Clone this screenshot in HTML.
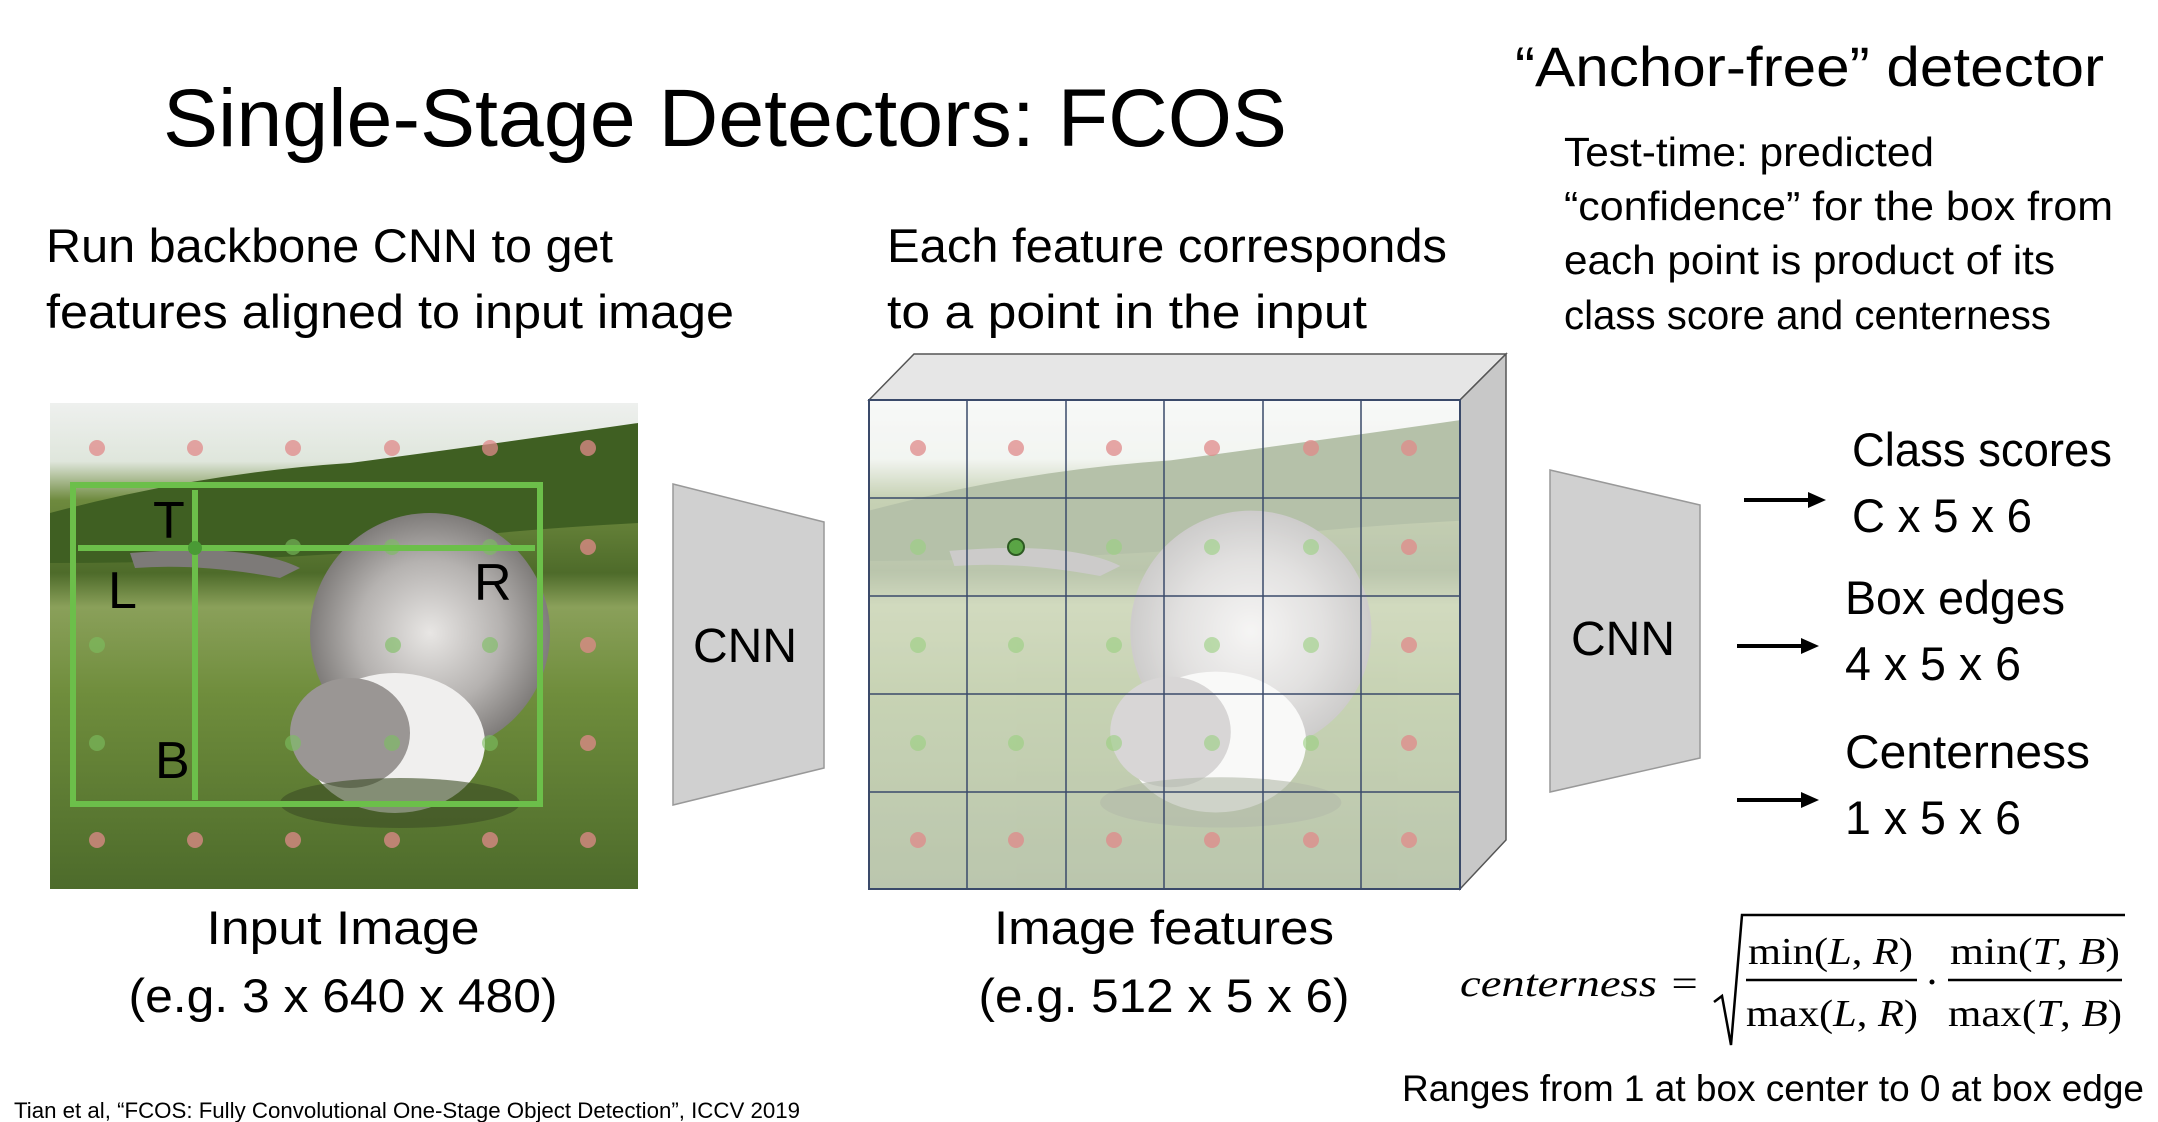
<!DOCTYPE html>
<html><head><meta charset="utf-8"><style>
html,body{margin:0;padding:0;background:#fff;}
svg{display:block;}
text{font-family:"Liberation Sans",sans-serif;fill:#000;}
.s{font-family:"Liberation Serif",serif;}
</style></head><body>
<svg width="2158" height="1122" viewBox="0 0 2158 1122" xmlns="http://www.w3.org/2000/svg">
<defs>
<linearGradient id="sky" x1="0" y1="0" x2="0" y2="1">
<stop offset="0" stop-color="#eef0ee"/><stop offset="0.12" stop-color="#dfe6dc"/>
<stop offset="0.2" stop-color="#6e8a3e"/><stop offset="0.35" stop-color="#4e6b2a"/>
<stop offset="0.42" stop-color="#8aa05a"/><stop offset="0.6" stop-color="#6f8d3c"/>
<stop offset="1" stop-color="#4d6b2b"/></linearGradient>
<radialGradient id="cat" cx="0.5" cy="0.5" r="0.5">
<stop offset="0" stop-color="#e8e6e4"/><stop offset="0.6" stop-color="#b5b2b0"/><stop offset="1" stop-color="#7f7c7a"/></radialGradient>
<g id="photo">
<rect x="0" y="0" width="588" height="486" fill="url(#sky)"/>
<path d="M0 110 Q150 70 300 60 Q450 40 588 20 L588 120 Q400 130 300 150 Q150 160 0 160Z" fill="#3f5f22"/>
<path d="M80 150 Q200 140 250 165 L230 175 Q150 160 85 165Z" fill="#7d7a78"/>
<ellipse cx="380" cy="230" rx="120" ry="120" fill="url(#cat)"/>
<ellipse cx="345" cy="340" rx="90" ry="70" fill="#f0efee"/>
<ellipse cx="300" cy="330" rx="60" ry="55" fill="#9a9694"/>
<ellipse cx="350" cy="400" rx="120" ry="25" fill="#3c4d25" opacity="0.6"/>
</g>
</defs>

<text x="163" y="146" font-size="82" textLength="1124" lengthAdjust="spacingAndGlyphs">Single-Stage Detectors: FCOS</text>
<text x="1515" y="86" font-size="56" textLength="589" lengthAdjust="spacingAndGlyphs">“Anchor-free” detector</text>
<g font-size="41">
<text x="1564" y="166" textLength="370" lengthAdjust="spacingAndGlyphs">Test-time: predicted</text>
<text x="1564" y="220" textLength="549" lengthAdjust="spacingAndGlyphs">“confidence” for the box from</text>
<text x="1564" y="274" textLength="491" lengthAdjust="spacingAndGlyphs">each point is product of its</text>
<text x="1564" y="329" textLength="487" lengthAdjust="spacingAndGlyphs">class score and centerness</text>
</g>
<g font-size="47">
<text x="46" y="262" textLength="567" lengthAdjust="spacingAndGlyphs">Run backbone CNN to get</text>
<text x="46" y="328" textLength="688" lengthAdjust="spacingAndGlyphs">features aligned to input image</text>
<text x="887" y="262" textLength="560" lengthAdjust="spacingAndGlyphs">Each feature corresponds</text>
<text x="887" y="328" textLength="480" lengthAdjust="spacingAndGlyphs">to a point in the input</text>
</g>

<g transform="translate(50,403)"><use href="#photo"/></g>
<g fill="#e08a8a" opacity="0.75">
<circle cx="97" cy="448" r="8"/><circle cx="195" cy="448" r="8"/><circle cx="293" cy="448" r="8"/><circle cx="392" cy="448" r="8"/><circle cx="490" cy="448" r="8"/><circle cx="588" cy="448" r="8"/>
<circle cx="588" cy="547" r="8"/><circle cx="588" cy="645" r="8"/><circle cx="588" cy="743" r="8"/>
<circle cx="97" cy="840" r="8"/><circle cx="195" cy="840" r="8"/><circle cx="293" cy="840" r="8"/><circle cx="392" cy="840" r="8"/><circle cx="490" cy="840" r="8"/><circle cx="588" cy="840" r="8"/>
</g>
<g fill="#7cc060" opacity="0.6">
<circle cx="97" cy="645" r="8"/><circle cx="393" cy="645" r="8"/><circle cx="490" cy="645" r="8"/><circle cx="97" cy="743" r="8"/><circle cx="293" cy="743" r="8"/><circle cx="392" cy="743" r="8"/><circle cx="490" cy="743" r="8"/><circle cx="293" cy="547" r="8"/><circle cx="392" cy="547" r="8"/><circle cx="490" cy="547" r="8"/>
</g>
<g stroke="#6cbf4a" stroke-width="6" fill="none">
<rect x="73" y="485" width="467" height="319"/>
<line x1="195" y1="490" x2="195" y2="800"/>
<line x1="78" y1="548" x2="535" y2="548"/>
</g>
<circle cx="195" cy="548" r="7" fill="#4a9a35"/>
<g font-size="52"><text x="153" y="538" fill="#7cc95a">T</text><text x="108" y="608" fill="#7cc95a">L</text><text x="474" y="600" fill="#7cc95a">R</text><text x="155" y="778" fill="#7cc95a">B</text></g>
<text x="343" y="944" font-size="47" text-anchor="middle" textLength="273" lengthAdjust="spacingAndGlyphs">Input Image</text>
<text x="343" y="1012" font-size="47" text-anchor="middle" textLength="429" lengthAdjust="spacingAndGlyphs">(e.g. 3 x 640 x 480)</text>

<polygon points="673,484 824,522 824,768 673,805" fill="#d0d0d0" stroke="#999" stroke-width="1.5"/>
<text x="745" y="662" font-size="48" text-anchor="middle">CNN</text>

<polygon points="869,400 914,354 1506,354 1460,400" fill="#e6e6e6" stroke="#555" stroke-width="1.5"/>
<polygon points="1460,400 1506,354 1506,840 1460,889" fill="#c8c8c8" stroke="#555" stroke-width="1.5"/>
<g transform="translate(869,400) scale(1.005,1.006)" opacity="0.55"><use href="#photo"/></g>
<rect x="869" y="400" width="591" height="489" fill="#ffffff" opacity="0.3"/>
<g stroke="#3a4a6a" stroke-width="1.5">
<line x1="967" y1="400" x2="967" y2="889"/><line x1="1066" y1="400" x2="1066" y2="889"/><line x1="1164" y1="400" x2="1164" y2="889"/><line x1="1263" y1="400" x2="1263" y2="889"/><line x1="1361" y1="400" x2="1361" y2="889"/>
<line x1="869" y1="498" x2="1460" y2="498"/><line x1="869" y1="596" x2="1460" y2="596"/><line x1="869" y1="694" x2="1460" y2="694"/><line x1="869" y1="792" x2="1460" y2="792"/>
</g>
<rect x="869" y="400" width="591" height="489" fill="none" stroke="#3a4a6a" stroke-width="2"/>
<g fill="#e08a8a" opacity="0.75">
<circle cx="918" cy="448" r="8"/><circle cx="1016" cy="448" r="8"/><circle cx="1114" cy="448" r="8"/><circle cx="1212" cy="448" r="8"/><circle cx="1311" cy="448" r="8"/><circle cx="1409" cy="448" r="8"/>
<circle cx="1409" cy="547" r="8"/><circle cx="1409" cy="645" r="8"/><circle cx="1409" cy="743" r="8"/>
<circle cx="918" cy="840" r="8"/><circle cx="1016" cy="840" r="8"/><circle cx="1114" cy="840" r="8"/><circle cx="1212" cy="840" r="8"/><circle cx="1311" cy="840" r="8"/><circle cx="1409" cy="840" r="8"/>
</g>
<g fill="#9ad080" opacity="0.6">
<circle cx="918" cy="547" r="8"/><circle cx="1114" cy="547" r="8"/><circle cx="1212" cy="547" r="8"/><circle cx="1311" cy="547" r="8"/>
<circle cx="918" cy="645" r="8"/><circle cx="1016" cy="645" r="8"/><circle cx="1114" cy="645" r="8"/><circle cx="1212" cy="645" r="8"/><circle cx="1311" cy="645" r="8"/>
<circle cx="918" cy="743" r="8"/><circle cx="1016" cy="743" r="8"/><circle cx="1114" cy="743" r="8"/><circle cx="1212" cy="743" r="8"/><circle cx="1311" cy="743" r="8"/>
</g>
<circle cx="1016" cy="547" r="8" fill="#5aa545" stroke="#2d5a22" stroke-width="2"/>
<text x="1164" y="944" font-size="47" text-anchor="middle" textLength="340" lengthAdjust="spacingAndGlyphs">Image features</text>
<text x="1164" y="1012" font-size="47" text-anchor="middle" textLength="371" lengthAdjust="spacingAndGlyphs">(e.g. 512 x 5 x 6)</text>

<polygon points="1550,470 1700,505 1700,758 1550,792" fill="#d0d0d0" stroke="#999" stroke-width="1.5"/>
<text x="1623" y="655" font-size="48" text-anchor="middle">CNN</text>

<g stroke="#000" stroke-width="4">
<line x1="1744" y1="500" x2="1812" y2="500"/><line x1="1737" y1="646" x2="1805" y2="646"/><line x1="1737" y1="800" x2="1805" y2="800"/>
</g>
<g fill="#000">
<polygon points="1826,500 1808,492 1808,508"/><polygon points="1819,646 1801,638 1801,654"/><polygon points="1819,800 1801,792 1801,808"/>
</g>
<g font-size="47">
<text x="1852" y="466" textLength="260" lengthAdjust="spacingAndGlyphs">Class scores</text><text x="1852" y="532" textLength="180" lengthAdjust="spacingAndGlyphs">C x 5 x 6</text>
<text x="1845" y="614" textLength="220" lengthAdjust="spacingAndGlyphs">Box edges</text><text x="1845" y="680" textLength="176" lengthAdjust="spacingAndGlyphs">4 x 5 x 6</text>
<text x="1845" y="768" textLength="245" lengthAdjust="spacingAndGlyphs">Centerness</text><text x="1845" y="834" textLength="176" lengthAdjust="spacingAndGlyphs">1 x 5 x 6</text>
</g>

<text x="1460" y="996" font-size="38" font-style="italic" class="s" textLength="240" lengthAdjust="spacingAndGlyphs">centerness =</text>
<path d="M1714 1002 L1722 996 L1731 1045 L1742 915 L2125 915" stroke="#000" stroke-width="2.5" fill="none"/>
<g font-size="38">
<text x="1748" y="964" class="s" textLength="165" lengthAdjust="spacingAndGlyphs">min(<tspan font-style="italic">L</tspan>, <tspan font-style="italic">R</tspan>)</text>
<text x="1746" y="1026" class="s" textLength="172" lengthAdjust="spacingAndGlyphs">max(<tspan font-style="italic">L</tspan>, <tspan font-style="italic">R</tspan>)</text>
<text x="1950" y="964" class="s" textLength="170" lengthAdjust="spacingAndGlyphs">min(<tspan font-style="italic">T</tspan>, <tspan font-style="italic">B</tspan>)</text>
<text x="1948" y="1026" class="s" textLength="174" lengthAdjust="spacingAndGlyphs">max(<tspan font-style="italic">T</tspan>, <tspan font-style="italic">B</tspan>)</text>
</g>
<line x1="1746" y1="980" x2="1917" y2="980" stroke="#000" stroke-width="2.5"/>
<line x1="1948" y1="980" x2="2122" y2="980" stroke="#000" stroke-width="2.5"/>
<circle cx="1932" cy="982" r="2.5" fill="#000"/>
<text x="1402" y="1101" font-size="37" textLength="742" lengthAdjust="spacingAndGlyphs">Ranges from 1 at box center to 0 at box edge</text>

<text x="14" y="1118" font-size="22" textLength="786" lengthAdjust="spacingAndGlyphs">Tian et al, “FCOS: Fully Convolutional One-Stage Object Detection”, ICCV 2019</text>
</svg>
</body></html>
